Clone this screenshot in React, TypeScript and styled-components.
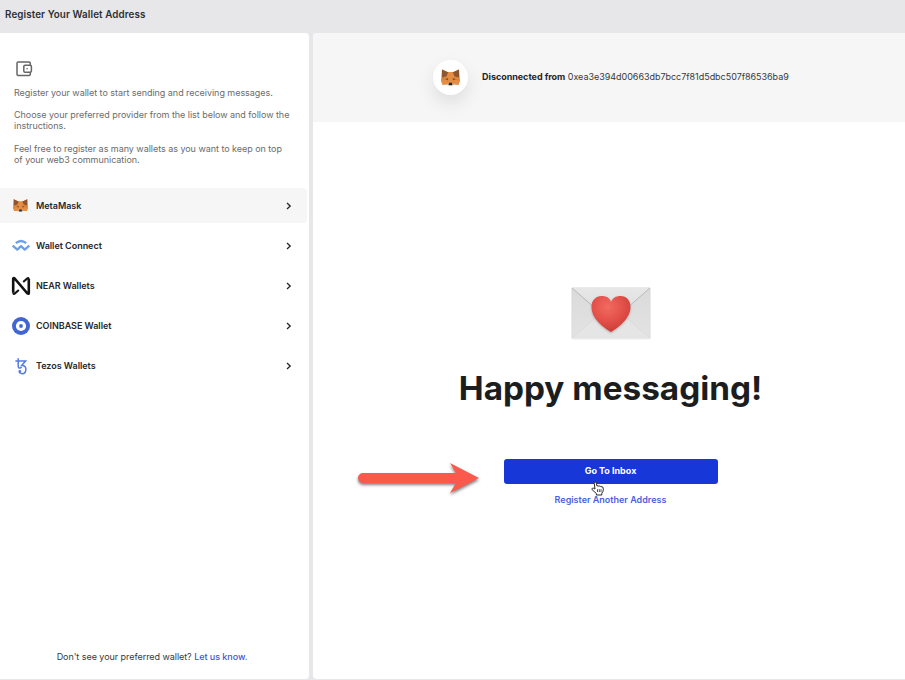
import React from "react";
import styled, { createGlobalStyle } from "styled-components";

const GlobalStyle = createGlobalStyle`
  * { box-sizing: border-box; }
  body { margin: 0; overflow: hidden; background: #e7e7e9; }
  p, h1, h2 { margin: 0; }
  svg { display: block; overflow: visible; }
`;

const Page = styled.div`
  width: 905px;
  height: 680px;
  display: flex;
  flex-direction: column;
  font-family: Inter, "Liberation Sans", sans-serif;
  color: #202124;
  background: #e7e7e9;
`;

const TitleBar = styled.header`
  height: 32.5px;
  flex: none;
  padding: 9px 5px 0;
`;

const Title = styled.h1`
  font-size: 9.8px;
  line-height: 12px;
  font-weight: 600;
  letter-spacing: 0.11px;
  color: #2d2e32;
`;

const Panels = styled.div`
  flex: 1;
  display: flex;
  gap: 4px;
  padding-bottom: 1px;
`;

const Sidebar = styled.aside`
  width: 309px;
  background: #fff;
  border-radius: 0 4px 4px 0;
  display: flex;
  flex-direction: column;
`;

const Intro = styled.section`
  height: 155.5px;
  padding: 28.5px 14px 0;
  display: flex;
  flex-direction: column;
  align-items: flex-start;
`;

const WalletMark = styled.span`
  margin-left: 2px;
`;

const Copy = styled.p<{ $gap?: number }>`
  margin-top: ${(p) => p.$gap ?? 11}px;
  font-size: 9px;
  line-height: 11.2px;
  letter-spacing: -0.04px;
  color: #6c6c6c;
  white-space: nowrap;
`;

const WalletList = styled.nav`
  display: flex;
  flex-direction: column;
  gap: 5.1px;
`;

const WalletRow = styled.a<{ $active?: boolean }>`
  width: 307px;
  height: 35px;
  padding: 0 13px 0 11px;
  display: flex;
  align-items: center;
  border-radius: 0 4px 4px 0;
  background: ${(p) => (p.$active ? "#f6f6f6" : "transparent")};
  color: #27282c;
`;

const IconBox = styled.span`
  width: 19px;
  height: 19px;
  display: grid;
  place-items: center;
`;

const WalletName = styled.span`
  flex: 1;
  margin-left: 6px;
  font-size: 9px;
  line-height: 12px;
  font-weight: 600;
  letter-spacing: -0.03px;
`;

const Hint = styled.p`
  margin-top: auto;
  padding-bottom: 16px;
  padding-right: 5px;
  text-align: center;
  font-size: 9px;
  line-height: 12px;
  letter-spacing: -0.05px;
  color: #38393d;
`;

const HintLink = styled.a`
  color: #3f55d8;
  font-weight: 500;
`;

const Main = styled.main`
  flex: 1;
  background: #fff;
  border-radius: 4px 0 0 4px;
  overflow: hidden;
  display: flex;
  flex-direction: column;
`;

const AccountBar = styled.section`
  height: 89.5px;
  flex: none;
  padding-left: 120px;
  display: flex;
  align-items: center;
  gap: 14px;
  overflow: hidden;
  background: #f6f6f7;
`;

const Avatar = styled.div`
  width: 35px;
  height: 35px;
  border-radius: 50%;
  background: #fff;
  display: grid;
  place-items: center;
  box-shadow: 0 8px 18px rgba(0, 0, 0, 0.1);
`;

const Account = styled.p`
  font-size: 9px;
  line-height: 12px;
  letter-spacing: -0.03px;
  white-space: nowrap;
  color: #38393d;
`;

const AccountLabel = styled.b`
  font-weight: 700;
  color: #242529;
`;

const Success = styled.section`
  flex: 1;
  padding: 165px 0 0 3px;
  display: flex;
  flex-direction: column;
  align-items: center;
`;

const Headline = styled.h2`
  margin-top: 26px;
  font-size: 33.3px;
  line-height: 44px;
  font-weight: 700;
  color: #1c1d1f;
  white-space: nowrap;
`;

const ButtonWrap = styled.div`
  position: relative;
  margin-top: 48.5px;
`;

const PrimaryButton = styled.button`
  display: block;
  width: 214px;
  height: 25px;
  padding: 0;
  border: 0;
  border-radius: 3px;
  background: #1837d8;
  color: #fff;
  font: 700 9px/24px Inter, "Liberation Sans", sans-serif;
`;

const Pointer = styled.div`
  position: absolute;
  left: 87px;
  top: 22px;
`;

const Arrow = styled.div`
  position: absolute;
  left: -146px;
  top: 3px;
  filter: drop-shadow(0 2px 1.5px rgba(0, 0, 0, 0.5));
`;

const SecondaryLink = styled.a`
  margin-top: 10px;
  font-size: 9px;
  line-height: 12px;
  font-weight: 600;
  color: #4a5fdd;
  white-space: nowrap;
`;

function FoxIcon({ width, height }: { width: number; height: number }) {
  return (
    <svg width={width} height={height} viewBox="0 0 40 38" preserveAspectRatio="none">
      <path d="M2 1L15 7H25L38 1L39 17L40 25L37 35L27 34L23 37H17L13 34L3 35L0 25L1 17Z" fill="#dc8338" />
      <path d="M2 1L16 8L12 16L2 19ZM38 1L24 8L28 16L38 19Z" fill="#8d5530" />
      <path d="M15 7H25L28 16L26 27L23 33H17L14 27L12 16Z" fill="#e58d43" />
      <path d="M0 25H13L13 34L3 35ZM40 25H27L27 34L37 35Z" fill="#e58e46" />
      <path d="M9 23L15 20V25ZM31 23L25 20V25Z" fill="#785038" />
      <path d="M13 30L17 32H23L27 30L26 35L23 37H17L14 35Z" fill="#c9ae98" />
      <path d="M17 31H23L24 36H16Z" fill="#282729" />
    </svg>
  );
}

function WalletIcon() {
  return (
    <svg width="17" height="16" viewBox="0 0 17 16" fill="none" stroke="#666" strokeWidth="1.5">
      <path d="M14.3 4V2.2Q14.3 1 13 1H2.2Q1 1 1 2.2V13.2Q1 14.4 2.2 14.4H13Q14.3 14.4 14.3 13.2V11.6" />
      <rect x="7.8" y="4.3" width="7.6" height="7" rx="1.2" />
      <circle cx="11.1" cy="7.8" r=".8" fill="#666" stroke="none" />
    </svg>
  );
}

function ConnectIcon() {
  return (
    <svg width="18" height="11" viewBox="0 0 18 11" fill="none" stroke="#6b9fea" strokeWidth="2.3">
      <path d="M3.8 3.2Q9 -1.2 14.2 3.2" />
      <path d="M.7 5.6L5.3 9.6L9 6.1L12.7 9.6L17.3 5.6" strokeLinejoin="round" />
    </svg>
  );
}

function NearIcon() {
  return (
    <svg width="18" height="18" viewBox="0 0 18 18" fill="none" stroke="#121212">
      <path d="M1.2 15.8V2.1Q1.2 .6 2.6 1.4L15.5 16.5Q16.8 17.3 16.8 15.9V2.1" strokeWidth="2.6" />
      <path d="M1.3 15.7Q1.3 17.5 2.7 16.6L6.8 13.1M16.7 2.3Q16.7 .5 15.3 1.4L11.2 5" strokeWidth="2" />
    </svg>
  );
}

function CoinbaseIcon() {
  return (
    <svg width="18" height="18" viewBox="0 0 18 18">
      <circle cx="9" cy="9" r="9" fill="#4265d4" />
      <circle cx="9" cy="9" r="5.1" fill="#fff" />
      <rect x="7.3" y="7.3" width="3.4" height="3.4" rx=".8" fill="#4265d4" />
    </svg>
  );
}

function TezosIcon() {
  return (
    <svg width="14" height="18" viewBox="0 0 14 18" fill="none" stroke="#567be0" strokeWidth="1.5">
      <path d="M4.2 1.3V9.1Q4.2 11.3 6 11Q7.3 10.7 7.4 9.8M1.4 4H11.6L7.7 8.5Q11.9 8.3 11.9 12.2Q11.7 16.7 8.2 16.7Q5.3 16.5 5.3 14.6" />
      <circle cx="5.9" cy="14.3" r=".65" fill="#567be0" />
    </svg>
  );
}

function Chevron() {
  return (
    <svg width="11" height="8" viewBox="0 0 11 8" fill="none" stroke="#27282c" strokeWidth="1.35">
      <path d="M4 1L7.2 4L4 7" />
    </svg>
  );
}

function LoveLetter() {
  return (
    <svg width="80" height="53" viewBox="0 0 80 53">
      <defs>
        <linearGradient id="paper" x1="0" y1="0" x2="0" y2="1">
          <stop stopColor="#dadada" />
          <stop offset="1" stopColor="#e3e3e3" />
        </linearGradient>
        <linearGradient id="flap" x1="0" y1="0" x2="0" y2="1">
          <stop stopColor="#e7e7e7" />
          <stop offset="1" stopColor="#dddddd" />
        </linearGradient>
        <radialGradient id="heart" cx=".42" cy=".3" r=".75">
          <stop stopColor="#f26a60" />
          <stop offset=".55" stopColor="#e24f49" />
          <stop offset="1" stopColor="#c63a36" />
        </radialGradient>
        <filter id="heartShadow" x="-20%" y="-20%" width="140%" height="140%">
          <feDropShadow dx="0" dy="1" stdDeviation="1" floodOpacity=".25" />
        </filter>
      </defs>
      <rect x=".8" y=".8" width="78.4" height="51.2" rx="1" fill="url(#paper)" stroke="#d8d8d8" strokeWidth=".6" />
      <path d="M1 51L29 27H51L79 51Z" fill="#e5e5e5" stroke="#d5d5d5" strokeWidth=".6" />
      <path d="M1 1H79L48 28Q40 33 32 28Z" fill="url(#flap)" />
      <path d="M1 1L32 28Q40 33 48 28L79 1" fill="none" stroke="#b9b9b9" />
      <path d="M1 51.4H79" stroke="#f0f0f0" />
      <path d="M40 45C33 41 20.5 32 20.5 20C20.5 13 25 9 30.5 9C35.5 9 39 11 40 15C41.5 11 45 9 49.5 9C55.5 9 59.5 13.5 59.5 20C59.5 31.5 47 41 40 45Z" fill="url(#heart)" filter="url(#heartShadow)" />
    </svg>
  );
}

const wallets = [
  { name: "MetaMask", icon: <FoxIcon width={15} height={13} />, active: true },
  { name: "Wallet Connect", icon: <ConnectIcon /> },
  { name: "NEAR Wallets", icon: <NearIcon /> },
  { name: "COINBASE Wallet", icon: <CoinbaseIcon /> },
  { name: "Tezos Wallets", icon: <TezosIcon /> },
];

export default function App() {
  return (
    <>
      <GlobalStyle />
      <Page>
        <TitleBar><Title>Register Your Wallet Address</Title></TitleBar>
        <Panels>
          <Sidebar>
            <Intro>
              <WalletMark><WalletIcon /></WalletMark>
              <Copy $gap={10}>Register your wallet to start sending and receiving messages.</Copy>
              <Copy>Choose your preferred provider from the list below and follow the<br />instructions.</Copy>
              <Copy>Feel free to register as many wallets as you want to keep on top<br />of your web3 communication.</Copy>
            </Intro>
            <WalletList>
              {wallets.map((w) => (
                <WalletRow key={w.name} $active={w.active}>
                  <IconBox>{w.icon}</IconBox>
                  <WalletName>{w.name}</WalletName>
                  <Chevron />
                </WalletRow>
              ))}
            </WalletList>
            <Hint>Don't see your preferred wallet? <HintLink>Let us know.</HintLink></Hint>
          </Sidebar>
          <Main>
            <AccountBar>
              <Avatar><FoxIcon width={19} height={17} /></Avatar>
              <Account><AccountLabel>Disconnected from</AccountLabel> 0xea3e394d00663db7bcc7f81d5dbc507f86536ba9</Account>
            </AccountBar>
            <Success>
              <LoveLetter />
              <Headline>Happy messaging!</Headline>
              <ButtonWrap>
                <PrimaryButton>Go To Inbox</PrimaryButton>
                <Arrow>
                  <svg width="122" height="32" viewBox="0 0 122 32">
                    <path d="M5 11H98L92 1L121 16L92 31L98 21H5A5 5 0 0 1 5 11Z" fill="#fb594b" />
                  </svg>
                </Arrow>
                <Pointer>
                  <svg width="14" height="15" viewBox="0 0 14 15">
                    <path d="M4 8L3.2 2.3Q3.2 1 4.2 1Q5.1 1 5.3 2.2L6 5Q7.1 4.3 7.8 5.2Q9 4.5 9.7 5.5Q12.5 5.1 12.4 8.3Q12.2 11 10.8 12.2V14H5.4V12.5L1.2 8.8Q.4 7.8 1.4 7.2Q2.2 6.8 4 8Z" fill="#fff" stroke="#25262c" />
                    <path d="M6.5 8.2V11M8.3 8.2V11M10 8.2V11" stroke="#25262c" strokeWidth=".8" />
                  </svg>
                </Pointer>
              </ButtonWrap>
              <SecondaryLink>Register Another Address</SecondaryLink>
            </Success>
          </Main>
        </Panels>
      </Page>
    </>
  );
}
